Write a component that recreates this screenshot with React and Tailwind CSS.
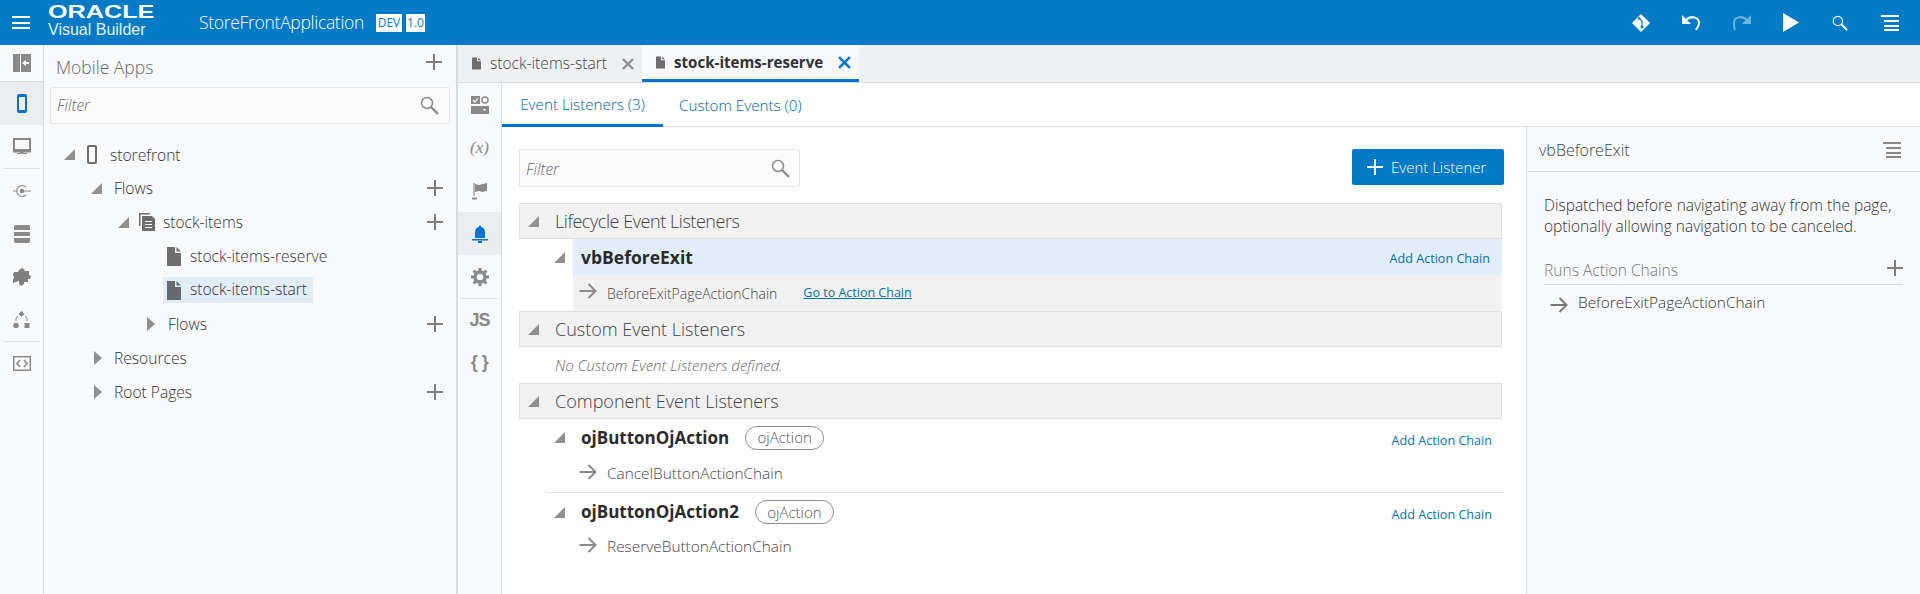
import React from "react";

const G = "#8a8a8a";
const Expanded = ({ c = "" }) => (
  <svg width="11" height="11" viewBox="0 0 11 11" className={c}><polygon points="11,0 11,11 0,11" fill="#8f8f8f" /></svg>
);
const Collapsed = ({ c = "" }) => (
  <svg width="8" height="14" viewBox="0 0 8 14" className={c}><polygon points="0,0 8,7 0,14" fill="#8f8f8f" /></svg>
);
const Plus = ({ size = 16, color = "#7d7d7d", w = 2 }) => (
  <svg width={size} height={size} viewBox="0 0 16 16"><path d="M8 0v16M0 8h16" stroke={color} strokeWidth={w} fill="none" /></svg>
);
const FileIcon = ({ w = 14, h = 19, color = "#6e6e6e" }) => (
  <svg width={w} height={h} viewBox="0 0 14 19"><path d="M0 0h8v6h6v13H0z" fill={color} /><path d="M9.5 0L14 4.5H9.5z" fill={color} /></svg>
);
const Search = ({ s = 19, color = "#8a8a8a" }) => (
  <svg width={s} height={s} viewBox="0 0 19 19" fill="none"><circle cx="7" cy="7" r="5.5" stroke={color} strokeWidth="1.5" /><path d="M11 11l7 7" stroke={color} strokeWidth="2.4" /></svg>
);
const Arrow = ({ color = "#8a8a8a" }) => (
  <svg width="19" height="16" viewBox="0 0 18 16" fill="none"><path d="M0 8h16M9 1l7 7-7 7" stroke={color} strokeWidth="2" /></svg>
);
const Lines = ({ color = "#fff" }) => (
  <svg width="18" height="16" viewBox="0 0 18 16"><path d="M0 1h18M3 6h15M3 11h15M3 15h15" stroke={color} strokeWidth="2" /></svg>
);

const rail1 = [
  { h: "h-[37px] border-b border-[#d9dce0]", i: (
    <svg width="18" height="18" viewBox="0 0 18 18"><rect width="7" height="18" fill={G} /><rect x="8" width="10" height="18" fill={G} /><path d="M9 9l4-3v2h3v2h-3v2z" fill="#fff" /></svg>
  ) },
  { h: "h-[43px] bg-[#ebecee]", i: (
    <svg width="10" height="19" viewBox="0 0 10 19" fill="none"><rect x="1" y="1" width="8" height="17" rx="1" stroke="#0572ce" strokeWidth="2" /><path d="M1 2h8M1 17h8" stroke="#0572ce" strokeWidth="2" /></svg>
  ) },
  { h: "h-[43px] border-b border-transparent", i: (
    <svg width="18" height="17" viewBox="0 0 18 17" fill="none"><rect x="1" y="1" width="16" height="11" stroke={G} strokeWidth="2" /><path d="M0 13h18v1H0zM8 14h2v1H8zM4 15.5h10" stroke={G} strokeWidth="1.2" /></svg>
  ) },
];
const Sep = ({ c = "mx-[3px]" }) => <div className={`${c} h-px bg-[#dfe1e4]`} />;
const Item = ({ children, active }) => (
  <div className={`flex h-[43px] items-center justify-center ${active ? "bg-[#ebecee]" : ""}`}>{children}</div>
);
const Connect = () => (
  <svg width="18" height="14" viewBox="0 0 18 14" fill="none"><circle cx="9" cy="7" r="2.2" fill={G} /><path d="M13 3A5.5 5.5 0 1 0 13 11" stroke={G} strokeWidth="1.2" /><path d="M0 7h4M11 7h7" stroke={G} strokeWidth="1.2" /></svg>
);
const Db = () => (
  <svg width="16" height="18" viewBox="0 0 16 18"><path d="M2 0h12q2 0 2 2v3H0V2q0-2 2-2zM0 7h16v4H0zM0 13h16v3q0 2-2 2H2q-2 0-2-2z" fill={G} /></svg>
);
const Puzzle = () => (
  <svg width="18" height="18" viewBox="0 0 18 18"><path d="M1 4h4l1-2 3-2 3 2-1 1h5v4l2 1-1 3-2 0v3h-4v2l-3 2-2-2v-3l-3 1-3 1v-3l1-3-1-2z" fill="#7f7f7f" /></svg>
);
const TreeI = () => (
  <svg width="17" height="18" viewBox="0 0 17 18"><path d="M8.5 0l3 3-3 3-3-3z" fill={G} /><circle cx="3" cy="14.5" r="2.7" fill={G} /><rect x="11.5" y="12" width="5" height="5" fill={G} /><path d="M5 5L3 7v3M12 5l2 2v3" stroke={G} strokeWidth="1" fill="none" /></svg>
);
const Code = () => (
  <svg width="18" height="15" viewBox="0 0 18 15" fill="none"><rect x=".75" y=".75" width="16.5" height="13.5" stroke={G} strokeWidth="1.5" /><path d="M7 4L4 7.5 7 11M11 4l3 3.5-3 3.5" stroke={G} strokeWidth="1.6" /></svg>
);

const Row = ({ pl, caret, icon, text, plus, textMl, h = "h-[34px]" }) => (
  <div className={`flex ${h} items-center pr-[13px] text-[15.6px] text-[#333]`} style={{ paddingLeft: pl }}>
    {caret}
    {icon}
    <span className={`${textMl} leading-[24px]`}>{text}</span>
    {plus && <span className="ml-auto flex"><Plus /></span>}
  </div>
);

const SectionHead = ({ children, t = "" }) => (
  <div className="mr-[2px] flex h-[36px] items-center border border-[#e0e0e0] bg-[#f1f1f1] pl-[8px] text-[18px] text-[#444]">
    <Expanded />
    <span className={`ml-[16px] ${t}`}>{children}</span>
  </div>
);
const Pill = () => (
  <span className="ml-[16px] flex h-[24px] w-[79px] items-center justify-center rounded-full border border-[#8c8c8c] text-[15px] text-[#555]">ojAction</span>
);
const ActionLink = ({ t = "" }) => <span className={`ml-auto pr-[12px] text-[12.6px] font-normal text-[#0572a8] ${t}`}>Add Action Chain</span>;

export default function App() {
  return (
    <div className="flex h-[594px] w-full flex-col overflow-hidden bg-white font-['Open_Sans',sans-serif] font-light text-[#333]">
      {/* header */}
      <div className="flex h-[45px] shrink-0 items-center bg-[#027ac6] text-white">
        <div className="ml-[12px] flex w-[18px] flex-col gap-[3.5px]">
          <div className="h-[2px] bg-white" /><div className="h-[2px] bg-white" /><div className="h-[2px] bg-white" />
        </div>
        <div className="ml-[18px] flex w-[110px] flex-col pb-[2px] font-['Liberation_Sans',sans-serif]">
          <span className="h-[17px] origin-left scale-x-[1.4] text-[18px] leading-[17px] font-bold">ORACLE</span>
          <span className="text-[16px] leading-[18px] font-normal opacity-90">Visual Builder</span>
        </div>
        <span className="ml-[41px] w-[177px] text-[17.5px] tracking-[-0.3px]">StoreFrontApplication</span>
        <span className="flex h-[18px] w-[26px] items-center justify-center bg-white text-[12px] font-normal text-[#027ac6]">DEV</span>
        <span className="ml-[4px] flex h-[18px] w-[19px] items-center justify-center bg-white text-[12px] font-normal text-[#027ac6]">1.0</span>
        <div className="ml-auto flex items-center pr-[7px]">
          <span className="flex w-[50px] justify-center">
            <svg width="18" height="18" viewBox="0 0 18 18"><path d="M9 0l9 9-9 9-9-9z" fill="#fff" /><path d="M7 4l3 3v5M7 4v0" stroke="#027ac6" strokeWidth="1.2" fill="none" /><circle cx="10" cy="13" r="1.5" fill="#027ac6" /><circle cx="7" cy="4.5" r="1.2" fill="#027ac6" /></svg>
          </span>
          <span className="flex w-[50px] justify-center">
            <svg width="19" height="17" viewBox="0 0 19 17" fill="none"><path d="M0 1v9h9z" fill="#fff" /><path d="M4 6c5-5 13-3 13 3 0 3-2 5-3 7" stroke="#fff" strokeWidth="2" /></svg>
          </span>
          <span className="flex w-[50px] justify-center">
            <svg width="19" height="17" viewBox="0 0 19 17" fill="none"><path d="M19 1v9h-9z" fill="#6fb3e0" /><path d="M15 6C10 1 2 3 2 9c0 3 0 5 1 7" stroke="#6fb3e0" strokeWidth="2" /></svg>
          </span>
          <span className="flex w-[50px] justify-center">
            <svg width="16" height="19" viewBox="0 0 16 19"><path d="M0 0l16 9.5L0 19z" fill="#fff" /></svg>
          </span>
          <span className="flex w-[50px] justify-center pr-[3px]"><Search s={16} color="#fff" /></span>
          <span className="flex w-[47px] justify-center"><Lines /></span>
        </div>
      </div>

      <div className="flex min-h-0 flex-1">
        {/* rail 1 */}
        <div className="w-[44px] shrink-0 border-r border-[#d6dbe0] bg-[#f8f9fb]">
          {rail1.map((r, i) => (
            <div key={i} className={`flex items-center justify-center ${r.h}`}>{r.i}</div>
          ))}
          <Sep />
          <Item><Connect /></Item>
          <Item><Db /></Item>
          <Item><Puzzle /></Item>
          <Item><TreeI /></Item>
          <Sep />
          <Item><Code /></Item>
        </div>

        {/* left panel */}
        <div className="w-[414px] shrink-0 border-r-[2px] border-[#d6dbe0] bg-[#f8f9fb]">
          <div className="flex h-[42px] items-start pr-[14px] pl-[12px] pt-[9px]">
            <span className="text-[17.5px] leading-[26px] text-[#666]">Mobile Apps</span>
            <span className="ml-auto flex"><Plus /></span>
          </div>
          <div className="ml-[6px] flex h-[37px] w-[400px] items-center rounded-[2px] border border-[#e3e5e8] bg-[#fbfbfb] pr-[10px] pl-[6px]">
            <span className="text-[15.5px] text-[#666] italic">Filter</span>
            <span className="ml-auto flex"><Search /></span>
          </div>
          <div className="mt-[14px]">
            <Row pl={20} h="h-[33px]" caret={<Expanded />} icon={<svg className="ml-[12px]" width="10" height="19" viewBox="0 0 10 19" fill="none"><rect x="1" y="1" width="8" height="17" rx="1" stroke="#6e6e6e" strokeWidth="2" /></svg>} textMl="ml-[13px]" text="storefront" />
            <Row pl={47} caret={<Expanded />} textMl="ml-[12px]" text="Flows" plus />
            <Row pl={74} caret={<Expanded />} icon={<svg className="ml-[10px]" width="16" height="18" viewBox="0 0 16 18"><path d="M0 0h11v1.500H1.500V13H0z" fill="#6e6e6e" /><path d="M3 3h10l3 3v12H3zM6 8v1h7V8zm0 3v1h7v-1zm0 3v1h7v-1z" fill="#6e6e6e" fillRule="evenodd" /></svg>} textMl="ml-[8px]" text="stock-items" plus />
            <Row pl={123} icon={<span className="flex"><FileIcon /></span>} textMl="ml-[9px]" text="stock-items-reserve" />
            <div className="flex h-[34px] items-center" style={{ paddingLeft: 119 }}>
              <div className="flex h-[26px] w-[150px] items-center bg-[#e1eef7] pl-[4px] text-[15.6px]">
                <FileIcon color="#666b70" />
                <span className="ml-[9px]">stock-items-start</span>
              </div>
            </div>
            <Row pl={103} caret={<Collapsed />} textMl="ml-[13px]" text="Flows" plus />
            <Row pl={50} caret={<Collapsed />} textMl="ml-[12px]" text="Resources" />
            <Row pl={50} caret={<Collapsed />} textMl="ml-[12px]" text="Root Pages" plus />
          </div>
        </div>

        {/* right side */}
        <div className="flex min-w-0 flex-1 flex-col">
          {/* tab strip */}
          <div className="flex h-[38px] shrink-0 border-b border-[#d6dde3] bg-[#eff0f2]">
            <div className="flex h-[37px] w-[184px] items-center pl-[14px]">
              <FileIcon w={9} h={13} />
              <span className="ml-[9px] text-[15.6px] text-[#444]">stock-items-start</span>
              <svg className="ml-auto mr-[8px]" width="12" height="12" viewBox="0 0 12 12"><path d="M1 1l10 10M11 1L1 11" stroke="#8f8f8f" strokeWidth="2.4" /></svg>
            </div>
            <div className="flex h-[37px] w-[217px] items-center border-b-[3px] border-[#0572ce] bg-[#f8f9fb] pl-[14px]">
              <FileIcon w={9} h={13} />
              <span className="ml-[9px] text-[15.1px] font-bold text-[#333]">stock-items-reserve</span>
              <svg className="ml-auto mr-[8px]" width="13" height="13" viewBox="0 0 12 12"><path d="M1 1l10 10M11 1L1 11" stroke="#0572ce" strokeWidth="2.4" /></svg>
            </div>
          </div>
          <div className="flex min-h-0 flex-1">
            {/* rail 2 */}
            <div className="w-[44px] shrink-0 border-r border-[#d6dde3] bg-[#f8f9fb]">
              <Item>
                <svg width="18" height="18" viewBox="0 0 18 18"><path d="M0 0h9v8H0z" fill={G} /><path d="M2 4l2 2 3-4" stroke="#fff" strokeWidth="1.2" fill="none" /><circle cx="14" cy="4" r="3" fill="none" stroke={G} strokeWidth="1.5" /><path d="M0 10h18v8H0z" fill={G} /><path d="M12 13h3l-1.500 2z" fill="#fff" /></svg>
              </Item>
              <Item><span className="font-['Liberation_Serif',serif] text-[17px] text-[#8a8a8a] italic">(x)</span></Item>
              <Item>
                <svg width="16" height="18" viewBox="0 0 16 18"><path d="M2 1v13" stroke={G} strokeWidth="1.2" /><path d="M3 2l4 1 4-1 4-1v8l-5 1-3-1-4 1z" fill={G} /><path d="M0 16.500h5" stroke={G} strokeWidth="2" /></svg>
              </Item>
              <Item active>
                <svg width="16" height="18" viewBox="0 0 16 18"><path d="M8 0l1.500 2c3 1 3.500 3 3.500 6v5H3V8c0-3 .5-5 3.500-6z" fill="#0572ce" /><path d="M0 14h16v1.500H0zM6 16h4v2H6z" fill="#0572ce" /></svg>
              </Item>
              <Item>
                <svg width="18" height="18" viewBox="0 0 18 18"><circle cx="9" cy="9" r="5" fill="none" stroke={G} strokeWidth="3.400" /><path d="M9 0v18M0 9h18M2.600 2.600l12.800 12.800M15.400 2.600L2.600 15.400" stroke={G} strokeWidth="3" strokeDasharray="3 12 3 0" /></svg>
              </Item>
              <Sep c="mx-[3px]" />
              <Item><span className="font-['Liberation_Sans',sans-serif] text-[18px] font-bold tracking-[-1px] text-[#8a8a8a]">JS</span></Item>
              <Item><span className="mb-[3px] font-['Liberation_Sans',sans-serif] text-[18px] font-bold tracking-[-0.5px] text-[#8a8a8a]">{"{ }"}</span></Item>
            </div>

            {/* content column */}
            <div className="flex min-w-0 flex-1 flex-col">
              <div className="flex h-[44px] shrink-0 border-b border-[#d6dde3]">
                <div className="flex h-[44px] w-[161px] items-center justify-center border-b-[3px] border-[#0572ce] pt-[2px] text-[15.2px] font-light text-[#0062a8]">Event Listeners (3)</div>
                <div className="ml-[16px] flex h-[43px] items-center pt-[2px] text-[15.2px] font-light text-[#0062a8]">Custom Events (0)</div>
              </div>
              <div className="flex min-h-0 flex-1">
                {/* main */}
                <div className="w-[1024px] shrink-0 pt-[22px] pr-[22px] pl-[17px]">
                  <div className="flex h-[38px] items-start justify-between">
                    <div className="flex h-[38px] w-[281px] items-center rounded-[2px] border border-[#e3e5e8] bg-[#fbfbfb] pr-[9px] pl-[6px]">
                      <span className="pt-[3px] text-[15.5px] text-[#666] italic">Filter</span>
                      <span className="ml-auto flex"><Search /></span>
                    </div>
                    <div className="flex h-[36px] w-[152px] items-center rounded-[2px] bg-[#027ac6] pl-[15px] text-[15px] text-white">
                      <Plus size={16} color="#fff" />
                      <span className="ml-[8px]">Event Listener</span>
                    </div>
                  </div>
                  <div className="mt-[16px]">
                    <SectionHead t="tracking-[-0.44px]">Lifecycle Event Listeners</SectionHead>
                    <div className="mr-[2px] flex h-[36px] items-center bg-white pl-[35px]">
                      <Expanded />
                      <div className="ml-[8px] flex h-[36px] flex-1 items-center bg-[#e1eef7] pl-[8px]">
                        <span className="text-[17.5px] font-bold text-[#2b2b2b]">vbBeforeExit</span>
                        <ActionLink t="pt-[5px]" />
                      </div>
                    </div>
                    <div className="mr-[2px] flex h-[36px] pl-[54px]">
                      <div className="flex flex-1 items-center bg-[#f1f1f1] pl-[6px] text-[14px] text-[#444]">
                        <span className="mb-[4px] flex"><Arrow /></span>
                        <span className="ml-[9px]">BeforeExitPageActionChain</span>
                        <span className="ml-[26px] text-[12.5px] font-normal text-[#0572a8] underline">Go to Action Chain</span>
                      </div>
                    </div>
                    <SectionHead>Custom Event Listeners</SectionHead>
                    <div className="flex h-[36px] items-center pl-[36px] text-[15px] text-[#666] italic">No Custom Event Listeners defined.</div>
                    <SectionHead>Component Event Listeners</SectionHead>
                    <div className="flex h-[37px] items-center pl-[35px]">
                      <Expanded />
                      <span className="ml-[16px] text-[17px] font-bold text-[#2b2b2b]">ojButtonOjAction</span>
                      <Pill />
                      <ActionLink t="pt-[8px]" />
                    </div>
                    <div className="flex h-[36px] items-center pl-[60px] text-[15.4px] text-[#444]">
                      <span className="mb-[4px] flex"><Arrow /></span>
                      <span className="ml-[9px]">CancelButtonActionChain</span>
                    </div>
                    <div className="ml-[27px] h-px bg-[#e0e0e0]" />
                    <div className="flex h-[36px] items-center pl-[35px] pt-[2px]">
                      <Expanded />
                      <span className="ml-[16px] text-[17px] font-bold text-[#2b2b2b]">ojButtonOjAction2</span>
                      <Pill />
                      <ActionLink t="pt-[7px]" />
                    </div>
                    <div className="flex h-[36px] items-center pl-[60px] text-[15.4px] text-[#444]">
                      <span className="mb-[4px] flex"><Arrow /></span>
                      <span className="ml-[9px]">ReserveButtonActionChain</span>
                    </div>
                  </div>
                </div>
                {/* right panel */}
                <div className="min-w-0 flex-1 border-l border-[#d6dde3] bg-[#f8f9fb]">
                  <div className="flex h-[45px] items-center border-b border-[#d6dde3] pr-[19px] pl-[12px] pt-[1px]">
                    <span className="text-[16px] text-[#444]">vbBeforeExit</span>
                    <span className="ml-auto flex"><Lines color="#8a8a8a" /></span>
                  </div>
                  <div className="pt-[23px] pr-[17px] pl-[17px]">
                    <p className="text-[15.5px] leading-[21px] whitespace-nowrap text-[#333]">Dispatched before navigating away from the page,<br />optionally allowing navigation to be canceled.</p>
                    <div className="mt-[18px] flex h-[30px] items-center justify-between border-b border-[#d6dde3] pt-[3px] pb-[1px] text-[15.6px] text-[#777]">
                      <span>Runs Action Chains</span>
                      <span className="mb-[6px] flex"><Plus /></span>
                    </div>
                    <div className="flex h-[36px] items-center pl-[6px] text-[15.4px] text-[#333]">
                      <span className="mt-[4px] flex"><Arrow color="#777" /></span>
                      <span className="ml-[9px]">BeforeExitPageActionChain</span>
                    </div>
                  </div>
                </div>
              </div>
            </div>
          </div>
        </div>
      </div>
    </div>
  );
}
